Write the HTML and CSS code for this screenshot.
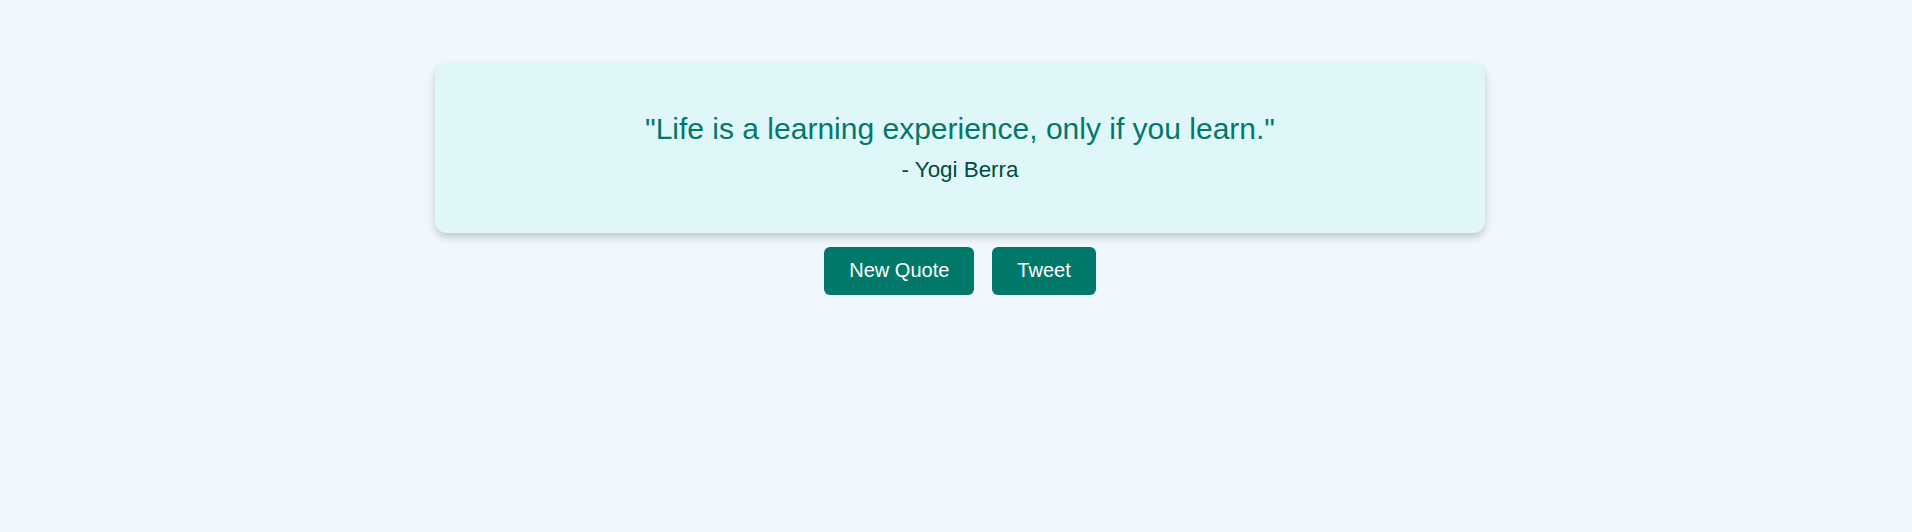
FILE: index.html
```html
<!DOCTYPE html>
<html lang="en">
<head>
<meta charset="utf-8">
<title>Random Quote</title>
<link rel="stylesheet" href="styles.css">
</head>
<body>
<main class="page">
  <section class="quote-card">
    <p class="quote-text">"Life is a learning experience, only if you learn."</p>
    <p class="quote-author">- Yogi Berra</p>
  </section>
  <div class="actions">
    <button class="btn">New Quote</button>
    <button class="btn">Tweet</button>
  </div>
</main>
</body>
</html>
```

FILE: styles.css
```css
html, body {
  margin: 0;
  padding: 0;
}
body {
  background: #f0f7ff;
  font-family: "Liberation Sans", Arial, sans-serif;
  height: 532px;
}
.page {
  display: flex;
  flex-direction: column;
  align-items: center;
  padding: 63px 0 0 8px;
}
.quote-card {
  box-sizing: border-box;
  width: 1050px;
  height: 170px;
  background: #e0f7fa;
  border-radius: 12px;
  box-shadow: 0 4px 8px rgba(0, 0, 0, 0.2);
  display: flex;
  flex-direction: column;
  align-items: center;
  padding-top: 49px;
}
.quote-text {
  margin: 0;
  font-size: 30px;
  line-height: 34px;
  color: #00796b;
}
.quote-author {
  margin: 11px 0 0;
  font-size: 22.4px;
  line-height: 26px;
  color: #004d40;
}
.actions {
  display: flex;
  gap: 18px;
  margin-top: 14px;
}
.btn {
  font-family: "Liberation Sans", Arial, sans-serif;
  font-size: 20px;
  line-height: 23px;
  padding: 12px 25px 13px;
  background: #00796b;
  color: #ffffff;
  border: none;
  border-radius: 6px;
  cursor: pointer;
}
```
